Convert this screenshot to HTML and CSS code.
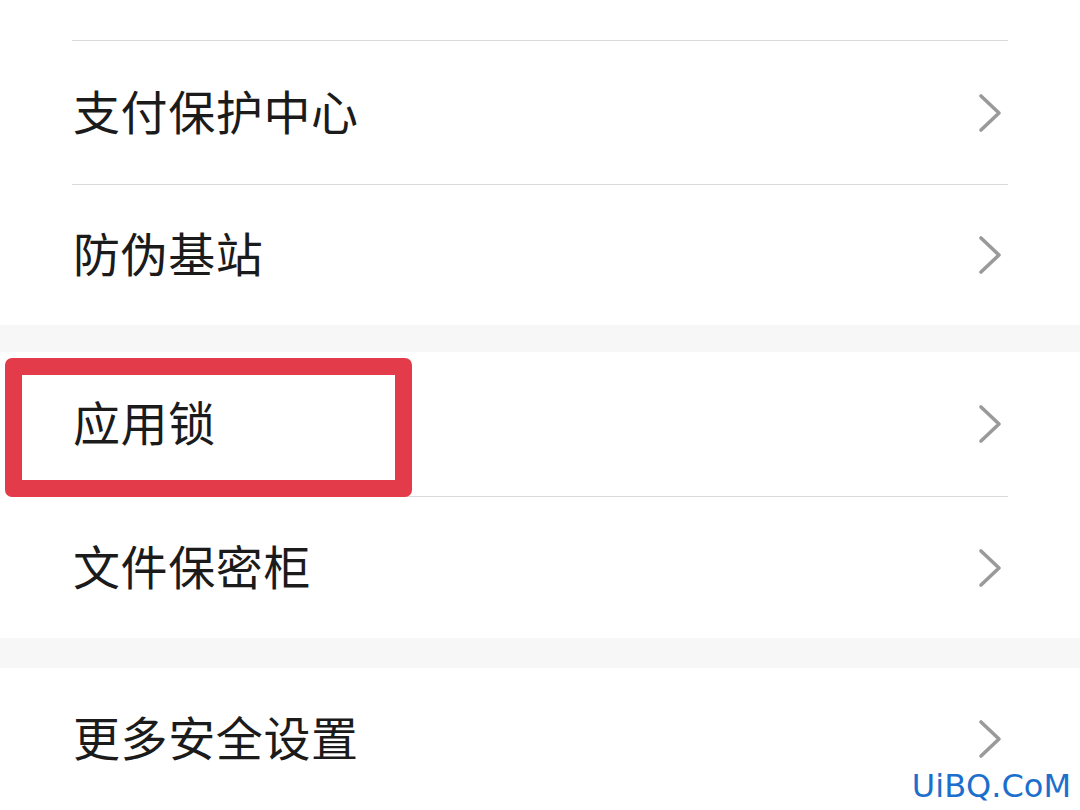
FILE: index.html
```html
<!DOCTYPE html>
<html lang="zh-CN">
<head>
    <meta charset="UTF-8">
    <meta name="viewport" content="width=device-width, initial-scale=1.0">
    <title>安全设置</title>
    <link rel="stylesheet" href="styles.css">
</head>
<body>
    <div class="group">
        <div class="top-space"></div>
        <div class="item item-first">
            <span class="label">支付保护中心</span>
            <svg class="arrow" viewBox="0 0 24 40"><path d="M3 3 L21 20 L3 37"/></svg>
        </div>
        <div class="item item-second">
            <span class="label">防伪基站</span>
            <svg class="arrow" viewBox="0 0 24 40"><path d="M3 3 L21 20 L3 37"/></svg>
        </div>
    </div>

    <div class="band"></div>

    <div class="group">
        <div class="item item-lock">
            <span class="label">应用锁</span>
            <svg class="arrow" viewBox="0 0 24 40"><path d="M3 3 L21 20 L3 37"/></svg>
            <div class="mark"></div>
        </div>
        <div class="item item-safe">
            <span class="label">文件保密柜</span>
            <svg class="arrow" viewBox="0 0 24 40"><path d="M3 3 L21 20 L3 37"/></svg>
        </div>
    </div>

    <div class="band band-low"></div>

    <div class="group">
        <div class="item item-more">
            <span class="label">更多安全设置</span>
            <svg class="arrow" viewBox="0 0 24 40"><path d="M3 3 L21 20 L3 37"/></svg>
        </div>
    </div>

    <div class="watermark">UiBQ.CoM</div>
</body>
</html>
```

FILE: styles.css
```css
*{
    margin: 0;
    padding: 0;
    box-sizing: border-box;
}
body{
    width: 1080px;
    height: 810px;
    overflow: hidden;
    background-color: #fff;
    font-family: "Noto Sans CJK SC", "Noto Sans", sans-serif;
    color: #1b1b1b;
    position: relative;
}
.group{
    background-color: #fff;
}
.top-space{
    height: 40px;
}
.item{
    margin: 0 72px;
    display: flex;
    align-items: center;
    justify-content: space-between;
    border-top: 1px solid #dadada;
    position: relative;
}
.item-first{
    height: 144px;
}
.item-second{
    height: 141px;
}
.item-lock{
    height: 144px;
    border-top: none;
    z-index: 2;
}
.item-safe{
    height: 142px;
}
.item-more{
    height: 142px;
    border-top: none;
}
.label{
    font-size: 47px;
    letter-spacing: 0.6px;
    padding-left: 1px;
    padding-bottom: 7px;
}
.arrow{
    width: 24px;
    height: 40px;
    margin-right: 6px;
}
.arrow path{
    fill: none;
    stroke: #9a9a9a;
    stroke-width: 3.6;
    stroke-linecap: round;
    stroke-linejoin: round;
}
/* grey gap between groups */
.band{
    height: 27px;
    background-color: #f7f7f7;
}
.band-low{
    height: 30px;
}
/* red highlight box */
.mark{
    position: absolute;
    left: -67px;
    top: 6px;
    width: 407px;
    height: 139px;
    border: 17px solid #e33b49;
    border-radius: 7px;
}
.watermark{
    position: absolute;
    right: 9px;
    bottom: 5px;
    font-family: "DejaVu Sans", sans-serif;
    font-size: 32px;
    color: #1c6fcc;
}
```
